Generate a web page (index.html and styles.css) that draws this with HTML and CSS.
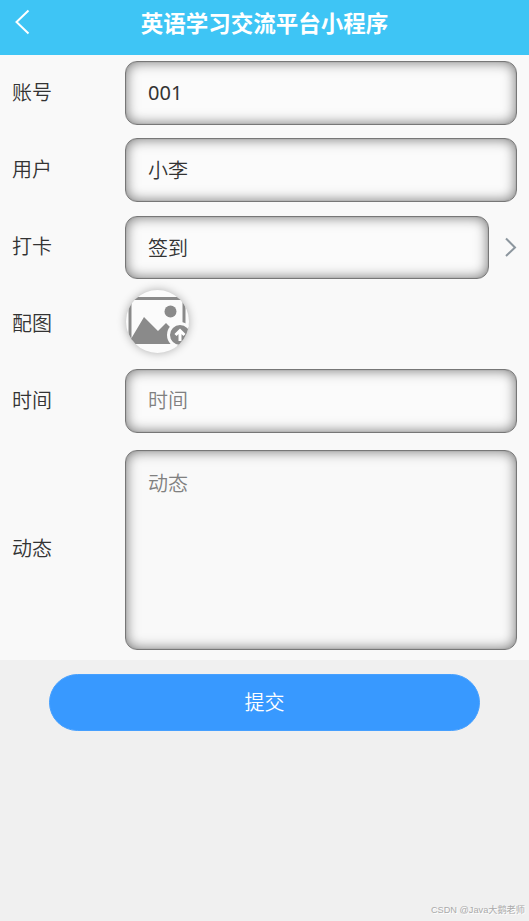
FILE: index.html
```html
<!DOCTYPE html>
<html>
	<head>
		<meta charset="utf-8" />
		<title>英语学习交流平台小程序</title>
		<link rel="stylesheet" href="styles.css">
	</head>
	<body>
		<header class="header">
			<svg class="back" viewBox="0 0 16 26"><path d="M14.500 1.500L2.500 13l12 11.500"/></svg>
			<h1 class="title">英语学习交流平台小程序</h1>
		</header>
		<form class="form">
			<div class="row">
				<label class="label">账号</label>
				<input class="field number" type="text" value="001">
			</div>
			<div class="row">
				<label class="label">用户</label>
				<input class="field" type="text" value="小李">
			</div>
			<div class="row">
				<label class="label">打卡</label>
				<div class="field select">签到</div>
				<svg class="arrow" viewBox="0 0 12 20"><path d="M1 1.500L10 10.500l-9 8.500"/></svg>
			</div>
			<div class="row">
				<label class="label">配图</label>
				<div class="upload">
					<svg viewBox="0 0 63 63">
						<path class="frame" d="M4 53V8.500h54V36"/>
						<path class="fill" d="M2 54l16-27 14 14 8-8 9 9v12z"/>
						<circle class="fill" cx="44.500" cy="21.500" r="6"/>
						<circle class="badge" cx="54" cy="45" r="11.500"/>
						<path class="up" d="M54 51v-10M49.500 45l4.500-4.500 4.500 4.500"/>
					</svg>
				</div>
			</div>
			<div class="row">
				<label class="label">时间</label>
				<input class="field" type="text" placeholder="时间">
			</div>
			<div class="row row-area">
				<label class="label">动态</label>
				<textarea class="field area" placeholder="动态"></textarea>
			</div>
		</form>
		<button class="submit" type="button">提交</button>
		<div class="mark">CSDN @Java大鹅老师</div>
	</body>
</html>
```

FILE: styles.css
```css
*{
	margin: 0;
	padding: 0;
	box-sizing: border-box;
}

body{
	display: flex;
	flex-direction: column;
	height: 921px;
	overflow: hidden;
	background: #f0f0f0;
	color: #333;
	font: 350 20px/30px "Noto Sans", "Noto Sans CJK SC", sans-serif;
}

svg{
	fill: none;
}

.header{
	display: flex;
	height: 55px;
	padding: 0 14px 7px;
	align-items: center;
	background: #3ec5f5;
}

.back{
	width: 16px;
	height: 26px;
	margin-top: -4px;
	stroke: #fff;
	stroke-width: 2;
}

.title{
	flex: 1;
	margin-right: 16px;
	text-align: center;
	font-size: 22.5px;
	font-weight: 700;
	color: #fff;
}

.form{
	background: #f9f9f9;
}

.row{
	display: flex;
	height: 77px;
	padding: 0 12px 1px;
	align-items: center;
}

.row-area{
	height: 220px;
	padding-bottom: 2px;
}

.label{
	width: 113px;
}

.field{
	flex: 1;
	min-width: 0;
	height: 64px;
	padding: 0 22px 1px;
	border: 1px solid #777;
	border-radius: 12px;
	background: #fbfbfb;
	box-shadow: inset 0 0 1px #777, inset 0 0 13px rgba(0,0,0,.55);
	color: #333;
	font: inherit;
	line-height: 62px;
	outline: none;
}

.number{
	font-weight: 400;
}

.select{
	height: 63px;
	padding-top: 1px;
}

.field::placeholder{
	color: #808080;
	opacity: 1;
}

.area{
	height: 200px;
	margin-top: 2px;
	padding: 18px 22px;
	line-height: 30px;
	background: #f9f9f9;
	resize: none;
}

.arrow{
	width: 12px;
	height: 20px;
	margin-left: 16px;
	stroke: #8c969e;
	stroke-width: 2;
}

.upload{
	width: 63px;
	height: 63px;
	margin: -6px 0 0 1px;
	border-radius: 50%;
	background: #fbfbfb;
	box-shadow: 0 0 10px rgba(0,0,0,.3);
	overflow: hidden;
}

.upload svg{
	display: block;
}

.frame{
	stroke: #8a8a8a;
	stroke-width: 3;
}

.fill{
	fill: #8a8a8a;
}

.badge{
	fill: #8a8a8a;
	stroke: #fbfbfb;
	stroke-width: 3;
}

.up{
	stroke: #fff;
	stroke-width: 3;
}

.submit{
	width: 431px;
	height: 57px;
	margin: 14px auto 0 49px;
	border: 1px solid #46a0ff;
	border-radius: 29px;
	background: #3899ff;
	color: #fff;
	font: inherit;
}

.mark{
	margin: auto 4px 3px auto;
	font: 9.2px/16px "Liberation Sans", "Noto Sans CJK SC", sans-serif;
	color: #aaa;
	text-shadow: 1px 1px #fff;
}
```
